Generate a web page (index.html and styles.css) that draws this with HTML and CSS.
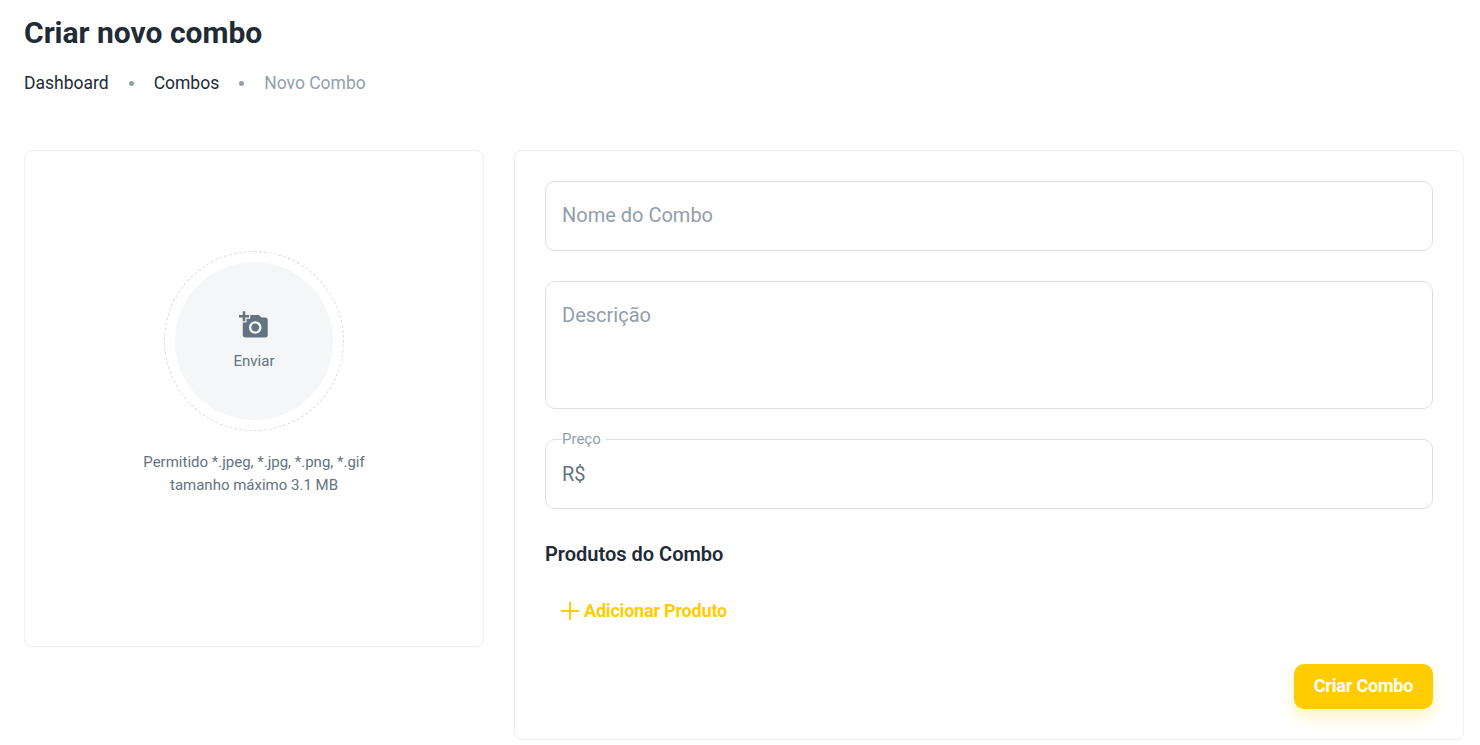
FILE: index.html
```html
<!DOCTYPE html>
<html lang="pt-BR">
<head>
    <meta charset="UTF-8">
    <meta name="viewport" content="width=device-width, initial-scale=1.0">
    <title>Criar novo combo</title>
    <link rel="stylesheet" href="styles.css">
</head>
<body>

<!-- Header -->
<h1 class="page-title">Criar novo combo</h1>
<nav class="breadcrumbs">
    <a href="#">Dashboard</a>
    <span class="dot"></span>
    <a href="#">Combos</a>
    <span class="dot"></span>
    <span class="current">Novo Combo</span>
</nav>

<div class="layout">
    <!-- Upload Card -->
    <section class="card upload-card">
        <div class="upload-ring">
            <div class="upload-circle">
                <svg class="upload-icon" viewBox="0 0 24 24" fill="currentColor">
                    <path fill-rule="evenodd" d="M3 4V1h2v3h3v2H5v3H3V6H0V4h3zm3 6V7h3V4h7l1.83 2H21c1.1 0 2 .9 2 2v12c0 1.1-.9 2-2 2H5c-1.1 0-2-.9-2-2V10h3zm7 9c2.76 0 5-2.24 5-5s-2.24-5-5-5-5 2.24-5 5 2.24 5 5 5zm-3.2-5c0 1.77 1.43 3.2 3.2 3.2s3.2-1.43 3.2-3.2-1.43-3.2-3.2-3.2-3.2 1.43-3.2 3.2z"/>
                </svg>
                <span>Enviar</span>
            </div>
        </div>
        <p class="upload-hint">Permitido *.jpeg, *.jpg, *.png, *.gif<br>tamanho máximo 3.1 MB</p>
    </section>

    <!-- Form Card -->
    <section class="card form-card">
        <input class="field" type="text" placeholder="Nome do Combo">
        <textarea class="field field-area" placeholder="Descrição"></textarea>

        <fieldset class="field price-field">
            <legend>Preço</legend>
            <span class="price-prefix">R$</span>
        </fieldset>

        <h2 class="section-title">Produtos do Combo</h2>

        <button class="add-product" type="button">
            <svg viewBox="0 0 20 20" fill="none" stroke="currentColor" stroke-width="2.2">
                <path d="M10 0v20M0 10h20"/>
            </svg>
            Adicionar Produto
        </button>

        <div class="form-actions">
            <button class="submit-btn" type="button">Criar Combo</button>
        </div>
    </section>
</div>

</body>
</html>
```

FILE: styles.css
```css
/* General Styling */
body {
    margin: 0;
    padding: 0 16px 5px 24px;
    font-family: Roboto, sans-serif;
    color: #212b36;
    background: #fff;
}

/* Header */
.page-title {
    margin: 0;
    padding-top: 15px;
    font-size: 30px;
    line-height: 36px;
    font-weight: 700;
}
.breadcrumbs {
    display: flex;
    align-items: center;
    margin-top: 20px;
    font-size: 17.5px;
    line-height: 24px;
}
.breadcrumbs a {
    color: #212b36;
    text-decoration: none;
}
.breadcrumbs .current { color: #919eab; }
.dot {
    width: 5px;
    height: 5px;
    margin: 0 20px;
    border-radius: 50%;
    background-color: #919eab;
}

/* Cards */
.layout {
    display: flex;
    align-items: flex-start;
    gap: 30px;
    margin-top: 55px;
}
.card {
    box-sizing: border-box;
    background: #fff;
    border: 1px solid #eceef0;
    border-radius: 8px;
}

/* Upload Card */
.upload-card {
    width: 460px;
    height: 497px;
    padding-top: 100px;
}
.upload-ring {
    box-sizing: border-box;
    width: 180px;
    height: 180px;
    margin: 0 auto;
    padding: 10px;
    border: 1px dashed #d8dce0;
    border-radius: 50%;
}
.upload-circle {
    display: flex;
    flex-direction: column;
    align-items: center;
    justify-content: center;
    height: 100%;
    border-radius: 50%;
    background-color: #f4f6f8;
    color: #637381;
    font-size: 15px;
    line-height: 22px;
}
.upload-icon {
    width: 30px;
    height: 30px;
    margin-bottom: 10px;
}
.upload-hint {
    margin: 20px 0 0;
    text-align: center;
    font-size: 15px;
    line-height: 22.5px;
    color: #637381;
}

/* Form Card */
.form-card {
    width: 950px;
    height: 590px;
    padding: 30px;
}
.field {
    display: block;
    box-sizing: border-box;
    width: 100%;
    height: 70px;
    margin: 0 0 30px;
    padding: 0 16px 2px;
    font-family: inherit;
    font-size: 20px;
    color: #212b36;
    background: #fff;
    border: 1px solid #dce0e4;
    border-radius: 10px;
    outline: none;
}
.field::placeholder { color: #919eab; opacity: 1; }
.field-area {
    height: 128px;
    padding-top: 20px;
    line-height: 26px;
    resize: none;
}

/* Price */
.price-field {
    min-width: 0;
    height: 79px;
    margin-top: -9px;
    margin-bottom: 0;
    padding: 0 16px;
}
.price-field legend {
    margin-left: 0;
    padding: 0 5px 0 0;
    font-size: 15px;
    line-height: 18px;
    color: #919eab;
}
.price-prefix {
    display: block;
    margin-top: 13px;
    font-size: 20px;
    line-height: 26px;
    color: #637381;
}

/* Products */
.section-title {
    margin: 33px 0 0;
    font-size: 20px;
    line-height: 24px;
    font-weight: 600;
}
.add-product {
    display: flex;
    align-items: center;
    gap: 5px;
    margin: 33px 0 0 16px;
    padding: 0;
    border: none;
    background: none;
    font-family: inherit;
    font-size: 18px;
    line-height: 24px;
    font-weight: 700;
    color: #ffcc00;
    letter-spacing: -0.2px;
    cursor: pointer;
}
.add-product svg {
    width: 18px;
    height: 18px;
}

/* Submit */
.form-actions {
    display: flex;
    justify-content: flex-end;
    margin-top: 41px;
}
.submit-btn {
    width: 139px;
    height: 45px;
    padding: 0 0 2px;
    border: none;
    border-radius: 10px;
    background-color: #ffcc00;
    color: #fff;
    font-family: inherit;
    font-size: 18px;
    font-weight: 700;
    letter-spacing: -0.2px;
    box-shadow: 0 8px 16px rgba(255, 204, 0, 0.24);
    cursor: pointer;
}
```
